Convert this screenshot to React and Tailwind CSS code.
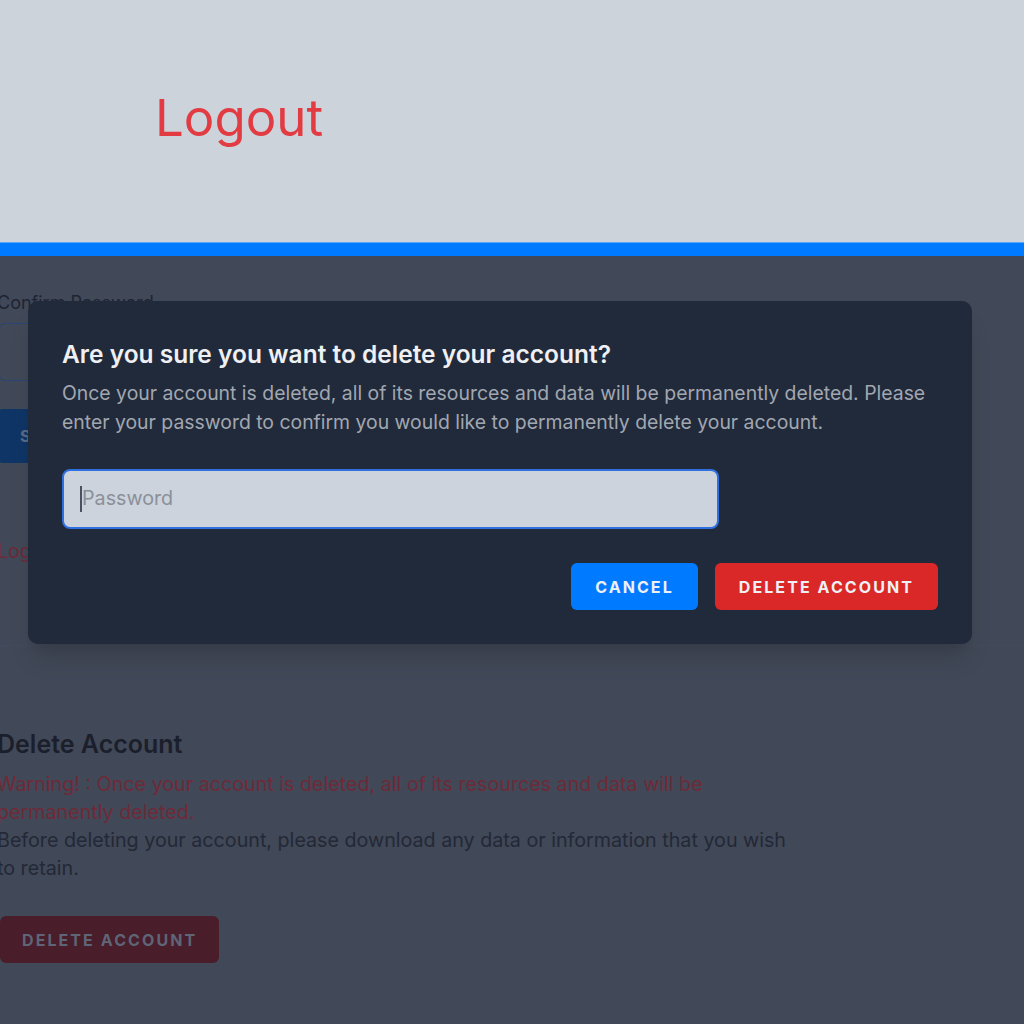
import React from "react";

export default function App() {
  return (
    <div className="w-[1024px] h-[1024px] overflow-hidden flex flex-col" style={{ fontFamily: "Inter, 'Noto Sans', sans-serif" }}>
      {/* Header */}
      <header className="h-[242px] bg-[#cdd3db] flex items-center pl-[155px] pb-[8px]">
        <span className="text-[51px] leading-none text-[#e23b42] font-normal">Logout</span>
      </header>
      <div className="h-[14px] bg-[#007bff] border-t border-[#5aa6ff]" />

      {/* Dimmed page */}
      <main className="relative flex-1 bg-[#414857] overflow-hidden">
        <div className="ml-[-3px] pt-[33px] flex flex-col">
          <label className="text-[18px] leading-[28px] text-[#1e2433]">Confirm Password</label>
          <div className="mt-[6px] h-[58px] w-[600px] border border-[#2b4574] rounded-md ml-[2px]" />
          <div className="mt-[28px] h-[54px] w-[120px] bg-[#0f3566] rounded-md flex items-center pl-[23px] text-[16px] font-bold tracking-widest text-[#5b6b86]">SAVE</div>
          <div className="mt-[74px] text-[19.5px] leading-[28px] text-[#6e2a36]">Logout</div>
        </div>
        <div className="mt-[80px] border-t border-dotted border-[#33507d]" />
        <section className="ml-[-3px] pt-[82px] w-[798px]">
          <h2 className="text-[25px] leading-[32px] font-semibold text-[#1b1f2b]">Delete Account</h2>
          <p className="mt-[10px] text-[19.7px] leading-[28px] text-[#6f2a37]">
            Warning! : Once your account is deleted, all of its resources and data will be permanently deleted.
          </p>
          <p className="text-[19.7px] leading-[28px] text-[#232936]">
            Before deleting your account, please download any data or information that you wish to retain.
          </p>
          <div className="mt-[34px] ml-[3px] inline-flex items-center h-[47px] px-[22px] bg-[#4a1d2a] rounded-md text-[16px] font-bold tracking-[0.13em] text-[#5e6577]">
            DELETE ACCOUNT
          </div>
        </section>

        {/* Modal */}
        <div className="absolute left-[28px] top-[45px] w-[944px] bg-[#212a3a] rounded-[10px] shadow-[0_20px_25px_-5px_rgba(0,0,0,0.12),0_8px_10px_-6px_rgba(0,0,0,0.1)] pt-[37px] px-[34px] pb-[34px]">
          <h3 className="text-[24.5px] leading-[32px] font-semibold text-[#eef0f3]">Are you sure you want to delete your account?</h3>
          <p className="mt-[9px] text-[19.4px] leading-[28.5px] text-[#a1a7b1]">
            Once your account is deleted, all of its resources and data will be permanently deleted. Please enter your password to confirm you would like to permanently delete your account.
          </p>
          <div className="mt-[33px] w-3/4 h-[60px] bg-[#ccd3dc] border-2 border-[#2f6fdf] rounded-lg flex items-center pl-[16px]">
            <span className="w-[2px] h-[26px] bg-[#4b5160]" />
            <span className="text-[19.7px] text-[#8a9099]">Password</span>
          </div>
          <div className="mt-[34px] flex justify-end gap-[17px]">
            <button className="h-[47px] px-[24px] bg-[#007bff] rounded-md text-[16px] font-bold tracking-[0.13em] text-[#eef0f5]">CANCEL</button>
            <button className="h-[47px] px-[24px] bg-[#da2828] rounded-md text-[16px] font-bold tracking-[0.13em] text-[#eef0f5]">DELETE ACCOUNT</button>
          </div>
        </div>
      </main>
    </div>
  );
}
